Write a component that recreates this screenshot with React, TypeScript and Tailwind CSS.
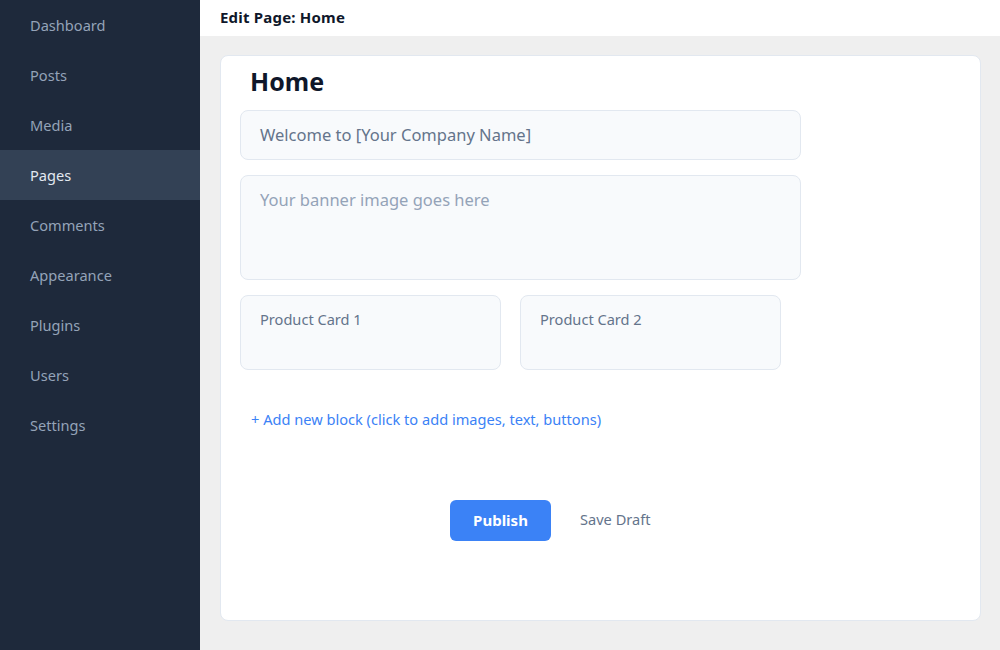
export default function App() {
  const items = ["Dashboard", "Posts", "Media", "Pages", "Comments", "Appearance", "Plugins", "Users", "Settings"];
  return (
    <div className="flex w-[1000px] h-[650px] overflow-hidden" style={{ fontFamily: '"Noto Sans", sans-serif' }}>
      <aside className="w-[201px] shrink-0 bg-[#1e293b] flex flex-col">
        {items.map((it) => (
          <div
            key={it}
            className={`h-[50px] flex items-center pl-[30px] pt-[2px] text-[14.6px] ${it === "Pages" ? "bg-[#334155] text-[#e2e8f0]" : "text-[#94a3b8]"}`}
          >
            {it}
          </div>
        ))}
      </aside>
      <div className="flex-1 flex flex-col bg-[#efefef] -ml-px">
        <header className="h-[36px] bg-white flex items-center pl-[20px] pb-[2px] text-[15px] font-bold text-[#0f172a] tracking-[0.2px]">
          Edit Page: Home
        </header>
        <div className="pt-[19px] pl-[20px] pr-[19px]">
          <div className="h-[566px] bg-white border border-[#e2e8f0] rounded-[8px] px-[19px] pt-[7px]">
            <h1 className="text-[25px] font-bold text-[#0f172a] pl-[10px] leading-[36px]">Home</h1>
            <div className="w-[561px] mt-[11px] flex flex-col gap-[15px]">
              <div className="h-[50px] bg-[#f8fafc] border border-[#e2e8f0] rounded-[8px] flex items-center px-[19px] text-[16.5px] text-[#64748b]">
                Welcome to [Your Company Name]
              </div>
              <div className="h-[105px] bg-[#f8fafc] border border-[#e2e8f0] rounded-[8px] px-[19px] pt-[12px] text-[16.5px] text-[#94a3b8]">
                Your banner image goes here
              </div>
              <div className="flex gap-[19px]">
                <div className="w-[261px] h-[75px] bg-[#f8fafc] border border-[#e2e8f0] rounded-[8px] px-[19px] pt-[13px] text-[14.6px] text-[#64748b]">
                  Product Card 1
                </div>
                <div className="w-[261px] h-[75px] bg-[#f8fafc] border border-[#e2e8f0] rounded-[8px] px-[19px] pt-[13px] text-[14.6px] text-[#64748b]">
                  Product Card 2
                </div>
              </div>
            </div>
            <div className="mt-[39px] pl-[11px] text-[14.6px] text-[#3b82f6]">
              + Add new block (click to add images, text, buttons)
            </div>
            <div className="mt-[69px] flex items-center pl-[210px] gap-[29px]">
              <button className="w-[101px] h-[41px] bg-[#3b82f6] rounded-[6px] text-white font-bold text-[15px]">
                Publish
              </button>
              <span className="text-[14.6px] text-[#64748b]">Save Draft</span>
            </div>
          </div>
        </div>
      </div>
    </div>
  );
}
